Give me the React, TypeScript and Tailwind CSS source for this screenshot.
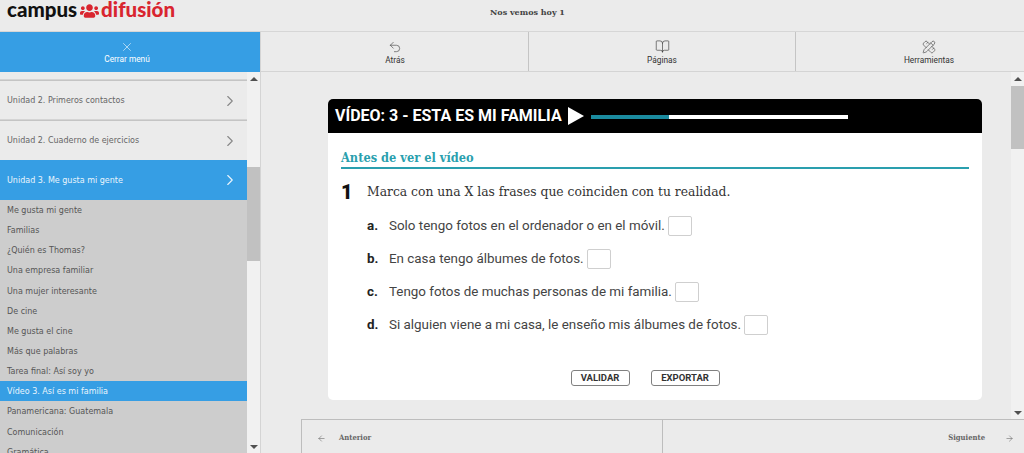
import React from "react";
import { X, Undo2, BookOpen, PencilRuler, ChevronRight, ArrowLeft, ArrowRight } from "lucide-react";
import { FaUsers } from "react-icons/fa";

const sans = "font-['DejaVu_Sans',sans-serif]";
const roboto = "font-['Roboto',sans-serif]";
const slab = "font-['DejaVu_Serif',serif]";

const units = [
  { label: "Unidad 2. Primeros contactos" },
  { label: "Unidad 2. Cuaderno de ejercicios" },
  { label: "Unidad 3. Me gusta mi gente", active: true },
];

const lessons = [
  "Me gusta mi gente",
  "Familias",
  "¿Quién es Thomas?",
  "Una empresa familiar",
  "Una mujer interesante",
  "De cine",
  "Me gusta el cine",
  "Más que palabras",
  "Tarea final: Así soy yo",
  "Vídeo 3. Así es mi familia",
  "Panamericana: Guatemala",
  "Comunicación",
  "Gramática",
];

const questions = [
  { letter: "a.", text: "Solo tengo fotos en el ordenador o en el móvil." },
  { letter: "b.", text: "En casa tengo álbumes de fotos." },
  { letter: "c.", text: "Tengo fotos de muchas personas de mi familia." },
  { letter: "d.", text: "Si alguien viene a mi casa, le enseño mis álbumes de fotos." },
];

const Scrollbar = ({ thumbTop, thumbHeight }: { thumbTop: string; thumbHeight: string }) => (
  <div className="w-[13px] shrink-0 bg-[#f1f1f1] flex flex-col items-center">
    <div className="h-[13px] shrink-0 flex items-center justify-center">
      <div className="w-0 h-0 border-x-[4px] border-x-transparent border-b-[4px] border-b-[#505050]" />
    </div>
    <div className={`w-full bg-[#c1c1c1] ${thumbTop} ${thumbHeight}`} />
    <div className="mt-auto h-[13px] shrink-0 flex items-center justify-center">
      <div className="w-0 h-0 border-x-[4px] border-x-transparent border-t-[4px] border-t-[#505050]" />
    </div>
  </div>
);

const ToolButton = ({ icon, label }: { icon: React.ReactNode; label: string }) => (
  <div className={`w-[267px] shrink-0 pt-[1px] flex flex-col items-center justify-center border-r border-[#c4c4c4] text-[#333] ${roboto}`}>
    <span className="h-4 flex items-center">{icon}</span>
    <span className="text-[8.3px] leading-[11px]">{label}</span>
  </div>
);

export default function App() {
  return (
    <div className="w-[1024px] h-[453px] overflow-hidden bg-[#ebebeb] flex flex-col">
      <header className="h-8 shrink-0 flex items-start border-b border-[#d6d6d6]">
        <div className="w-[261px] shrink-0 pl-[7px] flex items-center h-[19px] font-['Lato',sans-serif] font-black text-[20.5px] leading-[19px]">
          <span className="text-[#111]">campus</span>
          <FaUsers className="text-[#d9252f] w-[19px] h-[16px] ml-[3px] mr-[2px] mt-[2px]" />
          <span className="text-[#d9252f]">difusión</span>
        </div>
        <div className={`w-[267px] pl-[229px] whitespace-nowrap text-[8px] leading-[24px] font-bold text-[#444] ${slab}`}>
          Nos vemos hoy 1
        </div>
      </header>

      <div className="flex-1 flex min-h-0">
        <aside className="w-[261px] shrink-0 flex flex-col border-r border-[#d4d4d4]">
          <div className={`h-10 shrink-0 pr-[6px] pt-[1px] bg-[#369ee4] text-white flex flex-col items-center justify-center ${roboto}`}>
            <X size={14} strokeWidth={1} />
            <span className="text-[8.3px] leading-[11px]">Cerrar menú</span>
          </div>
          <div className="flex-1 flex min-h-0">
            <nav className={`w-[247px] shrink-0 pt-2 overflow-hidden ${sans}`}>
              {units.map((unit) =>
                unit.active ? (
                  <div key={unit.label} className="h-10 bg-[#369ee4] text-[#eaf5fc] flex items-center justify-between pl-[7px] pr-2 text-[8px]">
                    <span className="mt-[2px]">{unit.label}</span>
                    <ChevronRight size={18} strokeWidth={1.5} />
                  </div>
                ) : (
                  <div key={unit.label} className="h-10 border-t border-[#c4c4c4] shadow-[0_-1px_0_#d4d4d4] text-[#666] flex items-center justify-between pl-[7px] pr-2 text-[8px]">
                    <span className="mt-[1px]">{unit.label}</span>
                    <ChevronRight size={18} strokeWidth={1.5} className="text-[#888]" />
                  </div>
                )
              )}
              <ul className="bg-[#cdcdcd]">
                {lessons.map((lesson) => (
                  <li
                    key={lesson}
                    className={`h-[20.15px] leading-[21px] pl-[7px] text-[8px] whitespace-nowrap ${
                      lesson.startsWith("Vídeo") ? "bg-[#369ee4] text-[#eaf5fc]" : "text-[#555]"
                    }`}
                  >
                    {lesson}
                  </li>
                ))}
              </ul>
            </nav>
            <Scrollbar thumbTop="mt-[82px]" thumbHeight="h-[94px]" />
          </div>
        </aside>

        <div className="flex-1 min-w-0 flex flex-col">
          <div className="h-10 shrink-0 flex pl-[1px] border-b border-[#d4d4d4] overflow-hidden">
            <ToolButton icon={<Undo2 size={14} strokeWidth={1} />} label="Atrás" />
            <ToolButton icon={<BookOpen size={15} strokeWidth={1} />} label="Páginas" />
            <ToolButton icon={<PencilRuler size={14} strokeWidth={1} />} label="Herramientas" />
          </div>

          <div className="flex-1 min-h-0 flex">
            <main className="flex-1 min-w-0 pl-[67px] pr-[29px] pt-[27px]">
              <section className="h-[301px] bg-white rounded-[5px] overflow-hidden">
                <div className="h-[34px] bg-black flex items-center pl-[7px] text-white">
                  <h1 className={`text-[16px] font-bold whitespace-nowrap ${roboto}`}>VÍDEO: 3 - ESTA ES MI FAMILIA</h1>
                  <svg width="17" height="18" viewBox="0 0 17 18" className="ml-[6px] shrink-0">
                    <polygon points="0,0 16,9 0,18" fill="#fff" />
                  </svg>
                  <div className="ml-[6px] mt-[2px] w-[257px] h-1 bg-white">
                    <div className="w-[78px] h-full bg-[#1b8b9f]" />
                  </div>
                </div>
                <div className="px-[13px]">
                  <h2 className={`mt-4 pb-[1px] border-b-2 border-[#2a9fae] text-[12.7px] [font-stretch:condensed] leading-[17px] font-bold text-[#2a9fae] ${slab}`}>
                    Antes de ver el vídeo
                  </h2>
                  <div className="mt-[13px] flex items-center h-5">
                    <span className={`w-[26px] text-[20px] font-black text-[#111] ${roboto}`}>1</span>
                    <p className={`text-[12.35px] text-[#333] whitespace-nowrap ${slab}`}>Marca con una X las frases que coinciden con tu realidad.</p>
                  </div>
                  <ul className={`mt-[14px] pl-[26px] flex flex-col gap-[13px] text-[13.4px] text-[#444] ${roboto}`}>
                    {questions.map((q) => (
                      <li key={q.letter} className="flex items-center h-5">
                        <span className="w-[22px] font-bold text-[#222]">{q.letter}</span>
                        <span>{q.text}</span>
                        <span className="ml-[3px] w-6 h-5 border border-[#cfcfcf] rounded-[2px]" />
                      </li>
                    ))}
                  </ul>
                  <div className={`mt-[35px] flex justify-center gap-[21px] pr-5 text-[9.5px] font-bold text-[#333] ${roboto}`}>
                    <button className="w-[59px] h-4 border border-[#808080] rounded-[3px]">VALIDAR</button>
                    <button className="w-[69px] h-4 border border-[#808080] rounded-[3px]">EXPORTAR</button>
                  </div>
                </div>
              </section>
            </main>
            <Scrollbar thumbTop="mt-[1px]" thumbHeight="h-[63px]" />
          </div>

          <footer className={`h-[34px] shrink-0 ml-10 flex border-t border-l border-[#bdbdbd] text-[7.6px] [font-stretch:condensed] font-bold text-[#666] ${slab}`}>
            <div className="w-[361px] pt-[3px] border-r border-[#bdbdbd] flex items-center pl-[15px]">
              <ArrowLeft size={9} strokeWidth={1.5} className="mr-[13px]" />
              Anterior
            </div>
            <div className="flex-1 pt-[3px] flex items-center justify-end pr-[10px]">
              Siguiente
              <ArrowRight size={9} strokeWidth={1.5} className="ml-5" />
            </div>
          </footer>
        </div>
      </div>
    </div>
  );
}
